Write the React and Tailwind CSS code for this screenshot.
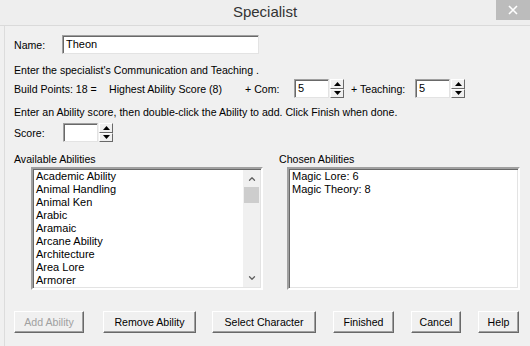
import { ChevronUp, ChevronDown } from 'lucide-react'

const DISPONIBLES = [
  'Academic Ability',
  'Animal Handling',
  'Animal Ken',
  'Arabic',
  'Aramaic',
  'Arcane Ability',
  'Architecture',
  'Area Lore',
  'Armorer',
]

const ELEGIDAS = ['Magic Lore: 6', 'Magic Theory: 8']

function Spinner() {
  return (
    <div className="flex flex-col w-[14px] h-[19px] ml-px">
      {[0, 1].map(i => (
        <div key={i}
             className="flex-1 flex items-center justify-center bg-[#f0f0f0] border border-t-white border-l-white border-b-[#696969] border-r-[#696969]">
          <svg width="7" height="4" viewBox="0 0 7 4">
            {i === 0
              ? <polygon points="3.5,0 7,4 0,4" fill="#000" />
              : <polygon points="0,0 7,0 3.5,4" fill="#000" />}
          </svg>
        </div>
      ))}
    </div>
  )
}

function Campo({ valor, ancho }) {
  return (
    <div className={`${ancho} h-[19px] bg-white border border-t-[#a0a0a0] border-l-[#a0a0a0] border-b-[#e3e3e3] border-r-[#e3e3e3] shadow-[inset_1px_1px_0_#696969] pl-[3px] leading-[17px] text-[11px] text-black`}>
      {valor}
    </div>
  )
}

function Boton({ children, ancho, deshabilitado }) {
  return (
    <div className={`${ancho} h-[22px] flex items-center justify-center bg-[#f0f0f0] border border-t-white border-l-white border-b-[#696969] border-r-[#696969] shadow-[inset_-1px_-1px_0_#a0a0a0] ${deshabilitado ? 'text-[#a0a0a0]' : 'text-black'}`}>
      {children}
    </div>
  )
}

export default function App() {
  return (
    <div className="w-[530px] h-[346px] bg-[#f0f0f0] flex flex-col overflow-hidden text-[10.6px] text-black"
         style={{ fontFamily: '"Liberation Sans", Arial, sans-serif' }}>

      {/* Barra de título */}
      <div className="h-[26px] grid grid-cols-[1fr_auto_1fr] bg-[#eeeeee] border-b border-[#dadada]">
        <div />
        <div className="text-[15px] leading-[24px] text-[#333333]">Specialist</div>
        <div className="flex justify-end items-start">
          <div className="w-[34px] h-[20px] bg-[#bcbcbc] flex items-center justify-center">
            <svg width="10" height="10" viewBox="0 0 10 10">
              <path d="M1 1 L9 9 M9 1 L1 9" stroke="#fff" strokeWidth="1.6" />
            </svg>
          </div>
        </div>
      </div>

      <div className="flex-1 ml-[4px] border-l border-[#dcdcdc] pl-[9px] flex flex-col leading-[14px]">

        <div className="mt-[9px] flex items-center h-[19px]">
          <span className="w-[48px]">Name:</span>
          <Campo valor="Theon" ancho="w-[197px]" />
        </div>

        <div className="mt-[9px] h-[14px]">Enter the specialist's Communication and Teaching .</div>

        <div className="mt-[2px] flex items-center h-[19px]">
          <span className="w-[95px]">Build Points: 18 =</span>
          <span className="w-[136px]">Highest Ability Score (8)</span>
          <span className="w-[49px]">+ Com:</span>
          <Campo valor="5" ancho="w-[35px]" />
          <Spinner />
          <span className="w-[64px] ml-[7px]">+ Teaching:</span>
          <Campo valor="5" ancho="w-[35px]" />
          <Spinner />
        </div>

        <div className="mt-[7px] h-[14px]">Enter an Ability score, then double-click the Ability to add. Click Finish when done.</div>

        <div className="mt-[4px] flex items-center h-[19px]">
          <span className="w-[49px]">Score:</span>
          <Campo valor="" ancho="w-[35px]" />
          <Spinner />
        </div>

        <div className="mt-[10px] flex h-[14px]">
          <span className="w-[265px]">Available Abilities</span>
          <span>Chosen Abilities</span>
        </div>

        <div className="mt-px flex h-[123px]">
          <div className="ml-[17px] w-[232px] flex bg-white border-2 border-t-[#a0a0a0] border-l-[#a0a0a0] border-b-white border-r-white shadow-[inset_1px_1px_0_#696969,inset_-1px_-1px_0_#e3e3e3]">
            <div className="flex-1 pl-[3px] pt-px leading-[13px] text-[11px]">
              {DISPONIBLES.map(a => <div key={a}>{a}</div>)}
            </div>
            <div className="w-[17px] bg-[#f0f0f0] flex flex-col items-center mr-px my-px">
              <ChevronUp size={10} strokeWidth={3} className="text-[#606060] mt-[4px]" />
              <div className="w-[15px] h-[16px] bg-[#cdcdcd] mt-[3px]" />
              <div className="flex-1" />
              <ChevronDown size={10} strokeWidth={3} className="text-[#606060] mb-[4px]" />
            </div>
          </div>
          <div className="ml-[24px] w-[233px] bg-white border-2 border-t-[#a0a0a0] border-l-[#a0a0a0] border-b-white border-r-white shadow-[inset_1px_1px_0_#696969,inset_-1px_-1px_0_#e3e3e3] pl-[3px] pt-px leading-[13px] text-[11px]">
            {ELEGIDAS.map(a => <div key={a}>{a}</div>)}
          </div>
        </div>

        <div className="mt-[21px] flex">
          <Boton ancho="w-[70px]" deshabilitado>Add Ability</Boton>
          <div className="ml-[19px]"><Boton ancho="w-[93px]">Remove Ability</Boton></div>
          <div className="ml-[16px]"><Boton ancho="w-[104px]">Select Character</Boton></div>
          <div className="ml-[17px]"><Boton ancho="w-[61px]">Finished</Boton></div>
          <div className="ml-[17px]"><Boton ancho="w-[50px]">Cancel</Boton></div>
          <div className="ml-[17px]"><Boton ancho="w-[41px]">Help</Boton></div>
        </div>
      </div>
    </div>
  )
}
